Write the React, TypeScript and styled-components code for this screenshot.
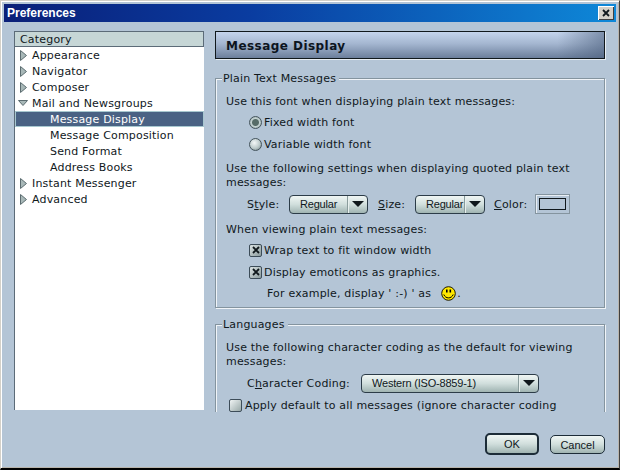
import styled, { createGlobalStyle } from "styled-components";

const GlobalStyle = createGlobalStyle`
  html, body { margin: 0; padding: 0; background: #b4c5d6; }
  #root { width: 620px; height: 470px; overflow: hidden; }
  * { box-sizing: border-box; }
`;

const panelFont = `"DejaVu Sans", Verdana, sans-serif`;
const controlFont = `"Liberation Sans", Arial, sans-serif`;

const Window = styled.div`
  width: 620px;
  height: 470px;
  display: flex;
  flex-direction: column;
  padding: 4px 4px 3px 4px;
  background: #b4c5d6;
  border-style: solid;
  border-width: 1px 1px 2px 1px;
  border-color: #d4d0c8 #404040 #000 #d4d0c8;
  box-shadow: inset 1px 1px 0 #fff, inset -1px -1px 0 #b8b4ac;
  font: 11px ${panelFont};
  letter-spacing: 0.18px;
  color: #10181c;
`;

const TitleBar = styled.div`
  height: 18px;
  margin: -1px -1px 0 -1px;
  padding: 0 2px 0 3px;
  display: flex;
  align-items: center;
  justify-content: space-between;
  background: linear-gradient(90deg, #0a1f78 0%, #0a3ca0 40%, #0e88d8 100%);
`;

const TitleText = styled.span`
  font: bold 12px ${controlFont};
  letter-spacing: 0;
  color: #fff;
`;

const CloseButton = styled.div`
  width: 16px;
  height: 14px;
  display: flex;
  align-items: center;
  justify-content: center;
  background: #d4d0c8;
  box-shadow: inset 1px 1px 0 #fff, inset -1px -1px 0 #404040;
`;

const Body = styled.div`
  flex: 1;
  display: flex;
  gap: 11px;
  padding: 9px 9px 0 9px;
  min-height: 0;
`;

const Tree = styled.div`
  width: 190px;
  height: 379px;
  background: #fff;
  border-top: 1px solid #5c6b78;
  border-left: 1px solid #5c6b78;
`;

const TreeHeader = styled.div`
  height: 15px;
  padding-left: 5px;
  line-height: 16px;
  background: #c6d6d6;
  border-bottom: 1px solid #5c6b78;
  border-right: 1px solid #5c6b78;
`;

const TreeRow = styled.div<{ $child?: boolean; $selected?: boolean }>`
  height: 16px;
  display: flex;
  align-items: center;
  padding-left: ${(p) => (p.$child ? "35px" : "5px")};
  white-space: nowrap;
  background: ${(p) => (p.$selected ? "#4a6284" : "transparent")};
  color: ${(p) => (p.$selected ? "#fff" : "#10181c")};
  box-shadow: ${(p) => (p.$selected ? "inset 0 0 0 1px #a8c8d0" : "none")};
`;

const Twisty = styled.svg<{ $open?: boolean }>`
  width: ${(p) => (p.$open ? 10 : 7)}px;
  height: 11px;
  margin-left: ${(p) => (p.$open ? -2 : 0)}px;
  margin-right: ${(p) => (p.$open ? 4 : 5)}px;
  flex: none;
`;

const Main = styled.div`
  width: 391px;
  height: 381px;
  overflow: hidden;
`;

const PageHeader = styled.div`
  height: 28px;
  margin-right: 1px;
  padding: 1px 0 0 10px;
  display: flex;
  align-items: center;
  font: bold 12px ${panelFont};
  letter-spacing: 0.45px;
  color: #0c1420;
  border: 1px solid #10181c;
  box-shadow: 1px 1px 0 #e8eef4;
  background: linear-gradient(90deg, rgba(196, 212, 236, 0) 88%, rgba(70, 90, 120, 0.55) 100%),
    linear-gradient(180deg, #c4d4ec 0%, #a4b6d0 45%, #6c7f9c 100%);
`;

const Group = styled.fieldset<{ $top: number }>`
  margin: ${(p) => p.$top}px 1px 0 0;
  padding: 0 0 4px 10px;
  min-width: 0;
  border: 1px solid #84949f;
  box-shadow: inset 1px 1px 0 #f0f4f8, 1px 1px 0 #f0f4f8;
`;

const GroupTitle = styled.legend`
  position: relative;
  height: 14px;
  line-height: 16px;
  margin-left: -4px;
  padding: 0 3px 0 1px;
  background: #b4c5d6;
`;

const Para = styled.div<{ $top: number }>`
  margin-top: ${(p) => p.$top}px;
  line-height: 14px;
  width: 372px;
`;

const OptionRow = styled.div<{ $height?: number; $indent?: number; $top?: number }>`
  height: ${(p) => p.$height ?? 22}px;
  margin-top: ${(p) => p.$top ?? 0}px;
  padding-left: ${(p) => p.$indent ?? 23}px;
  display: flex;
  align-items: center;
  white-space: nowrap;
`;

const Radio = styled.span<{ $on?: boolean }>`
  width: 13px;
  height: 13px;
  margin-right: 2px;
  flex: none;
  border-radius: 50%;
  border: 1px solid #44545c;
  background: ${(p) =>
    p.$on
      ? "radial-gradient(circle at 50% 50%, #566c68 0 3px, #c4d2d2 4px, #8a9c9c 100%)"
      : "radial-gradient(circle at 40% 35%, #f4f8f8 0, #bccaca 55%, #6c7c80 100%)"};
`;

const CheckBox = styled.span<{ $gap?: number; $checked?: boolean }>`
  width: 13px;
  height: 13px;
  margin-right: ${(p) => p.$gap ?? 2}px;
  flex: none;
  display: flex;
  align-items: center;
  justify-content: center;
  border: 1px solid #3c4c58;
  border-radius: 2px;
  background: ${(p) =>
    p.$checked ? "linear-gradient(135deg, #dce4e4, #8a9a9c)" : "linear-gradient(135deg, #f0f4f4, #98a8a8)"};
`;

const FieldLabel = styled.span<{ $width: number }>`
  width: ${(p) => p.$width}px;
  flex: none;
  u { text-underline-offset: 1px; }
`;

const Select = styled.div<{ $width: number; $gap: number }>`
  width: ${(p) => p.$width}px;
  height: 19px;
  margin-right: ${(p) => p.$gap}px;
  flex: none;
  display: grid;
  grid-template-columns: 1fr 20px;
  font: 11px ${controlFont};
  letter-spacing: -0.2px;
  color: #10181c;
  border: 1px solid #2c3c48;
  border-radius: 4px;
  overflow: hidden;
  background: linear-gradient(180deg, #f0f6f4 0%, #d0dedc 50%, #a0b4b2 100%);
`;

const SelectValue = styled.div`
  padding-left: 10px;
  line-height: 17px;
  white-space: nowrap;
  overflow: hidden;
`;

const SelectArrow = styled.div`
  display: flex;
  align-items: center;
  justify-content: center;
  border-left: 1px solid #8a9c9c;
  box-shadow: inset 1px 0 0 #e8f0ee;
`;

const ArrowDown = styled.span`
  width: 0;
  height: 0;
  border-style: solid;
  border-width: 6px 6px 0 6px;
  border-color: #10181c transparent transparent transparent;
`;

const ColorWell = styled.div`
  width: 35px;
  height: 20px;
  padding: 3px;
  background: #b4c5d6;
  border: 1px solid #84949f;
  box-shadow: inset 1px 1px 0 #e8eef4;
`;

const ColorSwatch = styled.div`
  height: 100%;
  border: 1px solid #10181c;
  background: #b4c5d6;
`;

const Smiley = styled.svg`
  width: 15px;
  height: 15px;
  margin: 0 1px 0 10px;
  flex: none;
`;

const Footer = styled.div`
  height: 57px;
  flex: none;
  display: flex;
  justify-content: flex-end;
  align-items: flex-start;
  gap: 11px;
  padding: 25px 10px 0 0;
`;

const Button = styled.div<{ $default?: boolean; $width: number }>`
  width: ${(p) => p.$width}px;
  height: ${(p) => (p.$default ? 22 : 19)}px;
  margin-top: ${(p) => (p.$default ? 0 : 2)}px;
  display: flex;
  align-items: center;
  justify-content: center;
  font: 11px ${controlFont};
  letter-spacing: 0;
  color: #10181c;
  border: ${(p) => (p.$default ? "2px" : "1px")} solid #1c2c38;
  border-radius: 5px;
  background: linear-gradient(180deg, #f0f6f4 0%, #d0dedc 50%, #a0b4b2 100%);
`;

const Triangle = ({ open }: { open?: boolean }) => (
  <Twisty $open={open} viewBox={open ? "0 0 10 11" : "0 0 7 11"}>
    {open ? (
      <path d="M0.5 2.5 H9.5 L5 7.5 Z" fill="#a8b8b8" stroke="#5c6c70" />
    ) : (
      <path d="M0.5 0.5 L6.5 5.5 L0.5 10.5 Z" fill="#a8b8b8" stroke="#5c6c70" />
    )}
  </Twisty>
);

const CrossMark = () => (
  <svg width="8" height="8" viewBox="0 0 8 8">
    <path d="M1 1 L7 7 M7 1 L1 7" stroke="#10181c" strokeWidth="1.8" />
  </svg>
);

const categories = [
  { label: "Appearance" },
  { label: "Navigator" },
  { label: "Composer" },
  { label: "Mail and Newsgroups", open: true },
  { label: "Message Display", child: true, selected: true },
  { label: "Message Composition", child: true },
  { label: "Send Format", child: true },
  { label: "Address Books", child: true },
  { label: "Instant Messenger" },
  { label: "Advanced" },
];

export default function App() {
  return (
    <>
      <GlobalStyle />
      <Window>
        <TitleBar>
          <TitleText>Preferences</TitleText>
          <CloseButton>
            <CrossMark />
          </CloseButton>
        </TitleBar>
        <Body>
          <Tree>
            <TreeHeader>Category</TreeHeader>
            {categories.map((c) => (
              <TreeRow key={c.label} $child={c.child} $selected={c.selected}>
                {!c.child && <Triangle open={c.open} />}
                {c.label}
              </TreeRow>
            ))}
          </Tree>
          <Main>
            <PageHeader>Message Display</PageHeader>
            <Group $top={12}>
              <GroupTitle>Plain Text Messages</GroupTitle>
              <Para $top={10}>Use this font when displaying plain text messages:</Para>
              <OptionRow $top={2}>
                <Radio $on />
                Fixed width font
              </OptionRow>
              <OptionRow>
                <Radio />
                Variable width font
              </OptionRow>
              <Para $top={7}>Use the following settings when displaying quoted plain text messages:</Para>
              <OptionRow $top={3} $indent={21}>
                <FieldLabel $width={42}>
                  S<u>t</u>yle:
                </FieldLabel>
                <Select $width={79} $gap={10}>
                  <SelectValue>Regular</SelectValue>
                  <SelectArrow>
                    <ArrowDown />
                  </SelectArrow>
                </Select>
                <FieldLabel $width={37}>
                  <u>S</u>ize:
                </FieldLabel>
                <Select $width={70} $gap={9}>
                  <SelectValue>Regular</SelectValue>
                  <SelectArrow>
                    <ArrowDown />
                  </SelectArrow>
                </Select>
                <FieldLabel $width={41}>
                  <u>C</u>olor:
                </FieldLabel>
                <ColorWell>
                  <ColorSwatch />
                </ColorWell>
              </OptionRow>
              <Para $top={8}>When viewing plain text messages:</Para>
              <OptionRow $top={2}>
                <CheckBox $checked>
                  <CrossMark />
                </CheckBox>
                Wrap text to fit window width
              </OptionRow>
              <OptionRow>
                <CheckBox $checked>
                  <CrossMark />
                </CheckBox>
                Display emoticons as graphics.
              </OptionRow>
              <OptionRow $height={20} $indent={41}>
                For example, display ' :-) ' as
                <Smiley viewBox="0 0 15 15">
                  <circle cx="7.5" cy="7.5" r="6.8" fill="#ffe800" stroke="#1c1800" />
                  <rect x="5" y="3.5" width="1.6" height="3" fill="#000" />
                  <rect x="8.5" y="3.5" width="1.6" height="3" fill="#000" />
                  <path d="M2.8 8.5 C4.5 13 10.5 13 12.2 8.5" fill="none" stroke="#000" />
                </Smiley>
                .
              </OptionRow>
            </Group>
            <Group $top={9}>
              <GroupTitle>Languages</GroupTitle>
              <Para $top={10}>Use the following character coding as the default for viewing messages:</Para>
              <OptionRow $top={3} $indent={21}>
                <FieldLabel $width={114}>
                  C<u>h</u>aracter Coding:
                </FieldLabel>
                <Select $width={178} $gap={0}>
                  <SelectValue>Western (ISO-8859-1)</SelectValue>
                  <SelectArrow>
                    <ArrowDown />
                  </SelectArrow>
                </Select>
              </OptionRow>
              <OptionRow $indent={3}>
                <CheckBox $gap={3} />
                Apply default to all messages (ignore character coding
              </OptionRow>
            </Group>
          </Main>
        </Body>
        <Footer>
          <Button $default $width={54}>
            OK
          </Button>
          <Button $width={55}>Cancel</Button>
        </Footer>
      </Window>
    </>
  );
}
